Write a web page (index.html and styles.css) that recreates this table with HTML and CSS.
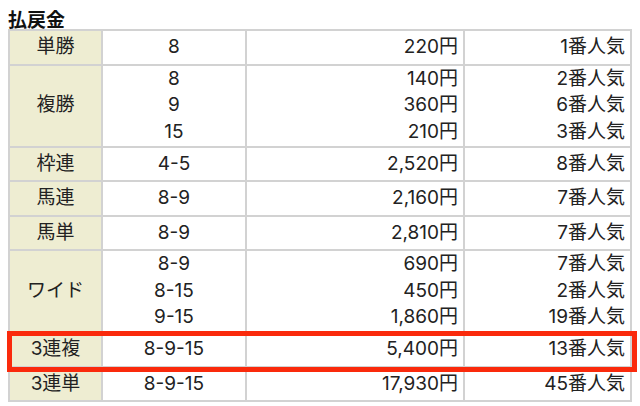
FILE: index.html
```html
<!DOCTYPE html>
<html lang="ja">
<head>
<meta charset="utf-8">
<link rel="stylesheet" href="styles.css">
</head>
<body>
<div class="wrap">
  <div class="title">払戻金</div>
  <table class="pay">
    <colgroup>
      <col class="c1"><col class="c2"><col class="c3"><col class="c4">
    </colgroup>
    <tr class="r1"><th>単勝</th><td class="num">8</td><td class="yen">220円</td><td class="pop">1番人気</td></tr>
    <tr class="r3"><th>複勝</th><td class="num">8<br>9<br>15</td><td class="yen">140円<br>360円<br>210円</td><td class="pop">2番人気<br>6番人気<br>3番人気</td></tr>
    <tr class="r1"><th>枠連</th><td class="num">4-5</td><td class="yen">2,520円</td><td class="pop">8番人気</td></tr>
    <tr class="r1"><th>馬連</th><td class="num">8-9</td><td class="yen">2,160円</td><td class="pop">7番人気</td></tr>
    <tr class="r1"><th>馬単</th><td class="num">8-9</td><td class="yen">2,810円</td><td class="pop">7番人気</td></tr>
    <tr class="r3"><th>ワイド</th><td class="num">8-9<br>8-15<br>9-15</td><td class="yen">690円<br>450円<br>1,860円</td><td class="pop">7番人気<br>2番人気<br>19番人気</td></tr>
    <tr class="r1"><th>3連複</th><td class="num">8-9-15</td><td class="yen">5,400円</td><td class="pop">13番人気</td></tr>
    <tr class="r1"><th>3連単</th><td class="num">8-9-15</td><td class="yen">17,930円</td><td class="pop">45番人気</td></tr>
  </table>
  <div class="highlight"></div>
</div>
</body>
</html>
```

FILE: styles.css
```css
html, body {
  margin: 0;
  padding: 0;
  background: #ffffff;
}
body {
  padding: 8px;
  font-family: Inter, "Noto Sans CJK JP", sans-serif;
  color: #222222;
}
.wrap {
  position: relative;
  width: 624px;
}
.title {
  font-family: "Noto Sans CJK JP", sans-serif;
  font-size: 19px;
  font-weight: bold;
  line-height: 21px;
  color: #111111;
}
.pay {
  border-collapse: collapse;
  table-layout: fixed;
  width: 624px;
  border: 2px solid #d2d2d2;
  font-size: 19px;
}
.c1 { width: 93px; }
.c2 { width: 144px; }
.c3 { width: 218px; }
.c4 { width: 167px; }
.pay th, .pay td {
  border: 2px solid #d2d2d2;
  padding: 0 5px;
  line-height: 26.5px;
  vertical-align: middle;
  font-weight: normal;
}
.pay th {
  background: #eeedd2;
  text-align: center;
}
.r1 { height: 34.5px; }
.r3 { height: 82px; }
.num { text-align: center; }
.yen { text-align: right; }
.pop { text-align: right; padding-right: 4px; }
.highlight {
  position: absolute;
  left: -1px;
  top: 323px;
  width: 630px;
  height: 41px;
  box-sizing: border-box;
  border: 5px solid #fa2a0c;
}
```
